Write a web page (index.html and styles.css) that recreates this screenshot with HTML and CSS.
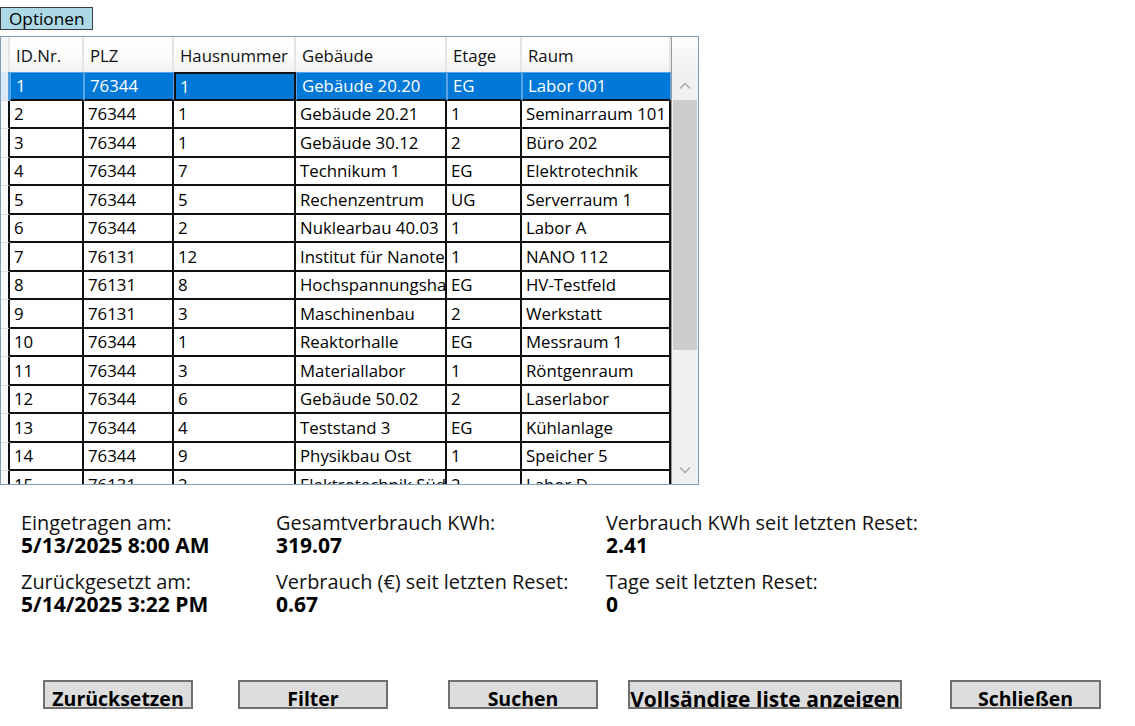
FILE: index.html
```html
<!DOCTYPE html>
<html lang="de">
<head>
<meta charset="utf-8">
<title>Optionen</title>
<link rel="stylesheet" href="styles.css">
</head>
<body>
<div class="app">
  <div class="menubar"><button class="menu-btn">Optionen</button></div>

  <div class="datagrid">
    <div class="grid-body">
      <div class="row head">
        <div class="rh"></div>
        <div class="hc">ID.Nr.</div>
        <div class="hc">PLZ</div>
        <div class="hc">Hausnummer</div>
        <div class="hc">Gebäude</div>
        <div class="hc">Etage</div>
        <div class="hc">Raum</div>
      </div>
      <div class="row sel">
        <div class="rh"></div>
        <div class="c">1</div><div class="c">76344</div><div class="c focus">1</div><div class="c">Gebäude 20.20</div><div class="c">EG</div><div class="c">Labor 001</div>
      </div>
      <div class="row"><div class="rh"></div><div class="c">2</div><div class="c">76344</div><div class="c">1</div><div class="c">Gebäude 20.21</div><div class="c">1</div><div class="c">Seminarraum 101</div></div>
      <div class="row"><div class="rh"></div><div class="c">3</div><div class="c">76344</div><div class="c">1</div><div class="c">Gebäude 30.12</div><div class="c">2</div><div class="c">Büro 202</div></div>
      <div class="row"><div class="rh"></div><div class="c">4</div><div class="c">76344</div><div class="c">7</div><div class="c">Technikum 1</div><div class="c">EG</div><div class="c">Elektrotechnik</div></div>
      <div class="row"><div class="rh"></div><div class="c">5</div><div class="c">76344</div><div class="c">5</div><div class="c">Rechenzentrum</div><div class="c">UG</div><div class="c">Serverraum 1</div></div>
      <div class="row"><div class="rh"></div><div class="c">6</div><div class="c">76344</div><div class="c">2</div><div class="c">Nuklearbau 40.03</div><div class="c">1</div><div class="c">Labor A</div></div>
      <div class="row"><div class="rh"></div><div class="c">7</div><div class="c">76131</div><div class="c">12</div><div class="c">Institut für Nanotechnologie</div><div class="c">1</div><div class="c">NANO 112</div></div>
      <div class="row"><div class="rh"></div><div class="c">8</div><div class="c">76131</div><div class="c">8</div><div class="c">Hochspannungshalle</div><div class="c">EG</div><div class="c">HV-Testfeld</div></div>
      <div class="row"><div class="rh"></div><div class="c">9</div><div class="c">76131</div><div class="c">3</div><div class="c">Maschinenbau</div><div class="c">2</div><div class="c">Werkstatt</div></div>
      <div class="row"><div class="rh"></div><div class="c">10</div><div class="c">76344</div><div class="c">1</div><div class="c">Reaktorhalle</div><div class="c">EG</div><div class="c">Messraum 1</div></div>
      <div class="row"><div class="rh"></div><div class="c">11</div><div class="c">76344</div><div class="c">3</div><div class="c">Materiallabor</div><div class="c">1</div><div class="c">Röntgenraum</div></div>
      <div class="row"><div class="rh"></div><div class="c">12</div><div class="c">76344</div><div class="c">6</div><div class="c">Gebäude 50.02</div><div class="c">2</div><div class="c">Laserlabor</div></div>
      <div class="row"><div class="rh"></div><div class="c">13</div><div class="c">76344</div><div class="c">4</div><div class="c">Teststand 3</div><div class="c">EG</div><div class="c">Kühlanlage</div></div>
      <div class="row"><div class="rh"></div><div class="c">14</div><div class="c">76344</div><div class="c">9</div><div class="c">Physikbau Ost</div><div class="c">1</div><div class="c">Speicher 5</div></div>
      <div class="row"><div class="rh"></div><div class="c">15</div><div class="c">76131</div><div class="c">2</div><div class="c">Elektrotechnik Süd</div><div class="c">2</div><div class="c">Labor D</div></div>
    </div>
    <div class="vscroll">
      <div class="sb-top"></div>
      <div class="sb-btn">
        <svg width="12" height="8" viewBox="0 0 12 8"><path d="M1 6.5 L6 1.5 L11 6.5" fill="none" stroke="#a6a6a6" stroke-width="1.3"/></svg>
      </div>
      <div class="sb-thumb"></div>
      <div class="sb-track"></div>
      <div class="sb-btn">
        <svg width="12" height="8" viewBox="0 0 12 8"><path d="M1 1.5 L6 6.5 L11 1.5" fill="none" stroke="#a6a6a6" stroke-width="1.3"/></svg>
      </div>
    </div>
  </div>

  <div class="info">
    <div class="info-col c1">
      <div class="item"><div class="lbl">Eingetragen am:</div><div class="val">5/13/2025 8:00 AM</div></div>
      <div class="item"><div class="lbl">Zurückgesetzt am:</div><div class="val">5/14/2025 3:22 PM</div></div>
    </div>
    <div class="info-col c2">
      <div class="item"><div class="lbl">Gesamtverbrauch KWh:</div><div class="val">319.07</div></div>
      <div class="item"><div class="lbl">Verbrauch (€) seit letzten Reset:</div><div class="val">0.67</div></div>
    </div>
    <div class="info-col c3">
      <div class="item"><div class="lbl">Verbrauch KWh seit letzten Reset:</div><div class="val">2.41</div></div>
      <div class="item"><div class="lbl">Tage seit letzten Reset:</div><div class="val">0</div></div>
    </div>
  </div>

  <div class="actions">
    <button class="btn b1">Zurücksetzen</button>
    <button class="btn b2">Filter</button>
    <button class="btn b3">Suchen</button>
    <button class="btn b4">Vollsändige liste anzeigen</button>
    <button class="btn b5">Schließen</button>
  </div>
</div>
</body>
</html>
```
FILE: styles.css
```css
* { box-sizing: border-box; }
html, body { margin: 0; padding: 0; background: #fff; }
body {
  font-family: "Open Sans", "Noto Sans", sans-serif;
  color: #000;
  width: 1135px;
  height: 726px;
  overflow: hidden;
}
.app { padding-top: 7px; }

.menubar { height: 23px; display: flex; }
.menu-btn {
  width: 93px;
  height: 23px;
  margin: 0;
  padding: 0 0 0 8px;
  text-align: left;
  background: #add8e6;
  border: 1px solid #3a3a3a;
  font-family: inherit;
  font-size: 17.2px;
  line-height: 20px;
  color: #000;
}

.datagrid {
  margin-top: 6px;
  width: 699px;
  height: 449px;
  border: 1px solid #7f9db9;
  display: flex;
  overflow: hidden;
}
.grid-body { width: 670px; overflow: hidden; }
.row {
  display: grid;
  grid-template-columns: 9px 74px 90px 122px 151px 75px 149px;
  height: 28.5px;
  font-size: 16.8px;
}
.row.head { height: 35px; background: linear-gradient(#ffffff, #fafafa 60%, #f1f1f1); }
.hc {
  display: flex;
  align-items: center;
  padding-left: 6px;
  padding-top: 1px;
  border-right: 2px solid #e4e4e4;
  white-space: nowrap;
  overflow: hidden;
  color: #111;
}
.head .rh { background: #f4f4f4; border-right: 2px solid #e4e4e4; border-bottom: none; }
.rh { background: #fafafa; border-bottom: 1px solid #dedede; border-right: 2px solid #111; }
.c {
  display: flex;
  align-items: center;
  padding-left: 4px;
  border-right: 2px solid #111;
  border-bottom: 2px solid #111;
  white-space: nowrap;
  overflow: hidden;
}
.row.sel .rh { background: #dce9f6; border-right-color: #4d9be0; }
.row.sel .c {
  background: #0078d7;
  color: #fff;
  border: 1px solid #5aa3e6;
  border-bottom: 2px solid #111;
  padding-left: 5px;
}
.row.sel .c.focus { border: 2px solid #111; padding-left: 4px; }

.vscroll {
  width: 27px;
  border-left: 1px solid #9a9a9a;
  background: #f0f0f0;
  display: flex;
  flex-direction: column;
}
.sb-top { height: 35px; background: linear-gradient(#fdfdfd, #f0f0f0); }
.sb-btn { height: 28px; display: flex; align-items: center; justify-content: center; }
.sb-thumb { height: 250px; background: #cdcdcd; margin: 0 1px; }
.sb-track { flex: 1; }

.info {
  display: flex;
  padding: 26px 0 0 21px;
  line-height: 23px;
}
.info-col { display: flex; flex-direction: column; gap: 13px; }
.c1 { width: 255px; }
.c2 { width: 330px; }
.c3 { width: 320px; }
.lbl { font-weight: 400; font-size: 19.9px; color: #111; white-space: nowrap; }
.val { font-weight: 700; font-size: 21px; white-space: nowrap; }

.actions {
  display: flex;
  align-items: flex-start;
  margin-top: 64px;
  padding-left: 43px;
}
.btn {
  height: 29px;
  margin: 0;
  padding: 9px 0 0 0;
  background: #dddddd;
  border: 2px solid #707070;
  font-family: inherit;
  font-weight: 700;
  font-size: 19.5px;
  line-height: 16px;
  color: #000;
  overflow: hidden;
  white-space: nowrap;
  text-align: center;
}
.b1 { width: 150px; }
.b2 { width: 150px; margin-left: 45px; }
.b3 { width: 150px; margin-left: 60px; }
.b4 { width: 274px; margin-left: 30px; padding-top: 9px; line-height: 16px; font-size: 21px; }
.b5 { width: 151px; margin-left: 48px; padding-top: 8px; line-height: 17px; }
```
